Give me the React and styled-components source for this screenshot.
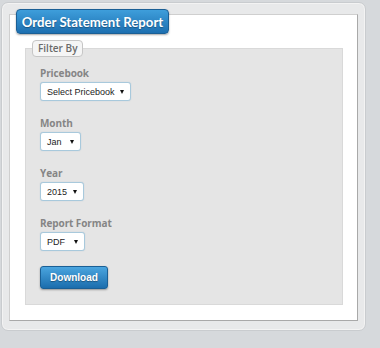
import styled, { createGlobalStyle } from "styled-components"

const GlobalStyle = createGlobalStyle`
  html, body {
    margin: 0;
    padding: 0;
    background: #d6d9dc;
    font-family: "Liberation Sans", Arial, sans-serif;
  }
  * { box-sizing: border-box; }
`

const campos = [
    { rotulo: "Pricebook", valor: "Select Pricebook", largura: 91 },
    { rotulo: "Month", valor: "Jan", largura: 41 },
    { rotulo: "Year", valor: "2015", largura: 44 },
    { rotulo: "Report Format", valor: "PDF", largura: 45 },
]

export default function App() {
    return (
        <>
            <GlobalStyle />
            <Pagina>
                <Moldura>
                    <Painel>
                        <Titulo>Order Statement Report</Titulo>
                        <Filtro>
                            <Legenda>Filter By</Legenda>
                            {campos.map((c) => (
                                <Campo key={c.rotulo}>
                                    <Rotulo>{c.rotulo}</Rotulo>
                                    <Seletor largura={c.largura}>
                                        <span>{c.valor}</span>
                                        <Seta />
                                    </Seletor>
                                </Campo>
                            ))}
                            <BotaoBaixar>Download</BotaoBaixar>
                        </Filtro>
                    </Painel>
                </Moldura>
            </Pagina>
        </>
    )
}

const Pagina = styled.div`
width: 380px;
height: 348px;
padding: 2px 0 0 1px;
`

const Moldura = styled.div`
width: 365px;
height: 329px;
background: #e8e9ea;
border: 1px solid #c9cccf;
border-radius: 7px;
padding: 11px 7px 9px 7px;
box-shadow: inset 0 0 0 1px #f3f3f3;
`

const Painel = styled.div`
width: 349px;
height: 307px;
background: #ffffff;
border: 1px solid #cfcfcf;
border-right-color: #a9a9a9;
border-bottom-color: #a9a9a9;
padding: 0 14px 0 15px;
display: flex;
flex-direction: column;
align-items: flex-start;
`

const Titulo = styled.div`
margin-top: -6px;
margin-left: -9px;
width: 153px;
height: 25px;
display: flex;
align-items: center;
justify-content: center;
background: linear-gradient(#3e9edb, #1d6fb0);
border: 1px solid #1b5f95;
border-radius: 4px;
box-shadow: 0 1px 2px rgba(0, 0, 0, 0.35);
color: #ffffff;
font-family: Lato, "Liberation Sans", sans-serif;
font-weight: 700;
font-size: 13.2px;
text-shadow: 0 1px 1px rgba(0, 0, 0, 0.3);
`

const Filtro = styled.fieldset`
margin: 6px 0 0 0;
width: 318px;
background: #e5e5e5;
border: 1px solid #d9d9d9;
padding: 9px 14px 15px 14px;
display: flex;
flex-direction: column;
align-items: flex-start;
`

const Legenda = styled.legend`
margin-left: -8px;
height: 17px;
padding: 0 5px;
background: #f5f5f5;
border: 1px solid #c6c6c6;
border-radius: 4px;
color: #6a6a6a;
font-family: "Open Sans", sans-serif;
font-size: 10px;
font-weight: 600;
line-height: 15px;
`

const Campo = styled.div`
display: flex;
flex-direction: column;
align-items: flex-start;
margin-bottom: 15px;
`

const Rotulo = styled.div`
height: 14px;
line-height: 14px;
margin-bottom: 2px;
color: #858585;
font-family: "Open Sans", sans-serif;
font-weight: 700;
font-size: 10px;
letter-spacing: -0.1px;
`

const Seletor = styled.div`
width: ${(p) => p.largura}px;
height: 19px;
background: #ffffff;
border: 1px solid #a8c9dc;
border-radius: 3px;
box-shadow: 0 0 1px rgba(120, 170, 200, 0.5);
padding: 0 6px 0 6px;
display: flex;
align-items: center;
justify-content: space-between;
color: #222222;
font-size: 9px;
`

const Seta = styled.span`
width: 0;
height: 0;
border-left: 2.5px solid transparent;
border-right: 2.5px solid transparent;
border-top: 4px solid #111111;
`

const BotaoBaixar = styled.button`
width: 68px;
height: 23px;
padding: 0;
background: linear-gradient(#4aa5df, #1b6dad);
border: 1px solid #1a5f95;
border-radius: 3px;
box-shadow: 0 1px 2px rgba(0, 0, 0, 0.35);
color: #ffffff;
font-family: "Liberation Sans", Arial, sans-serif;
font-weight: 700;
font-size: 10px;
text-shadow: 0 1px 1px rgba(0, 0, 0, 0.35);
`
